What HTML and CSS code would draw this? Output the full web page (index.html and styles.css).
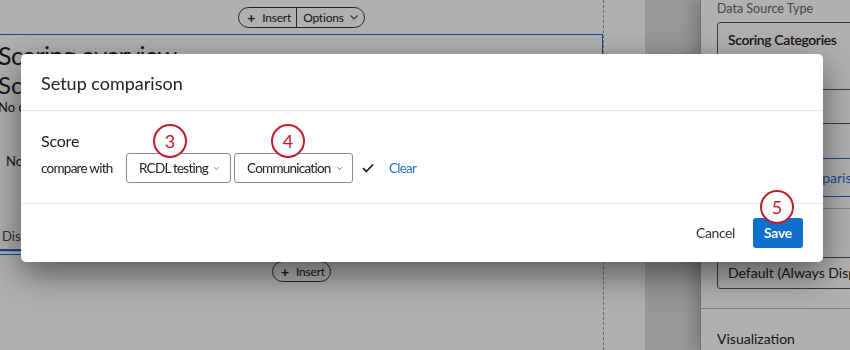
FILE: index.html
```html
<!DOCTYPE html>
<html lang="en">
<head>
    <meta charset="UTF-8">
    <meta name="viewport" content="width=device-width, initial-scale=1.0">
    <title>Setup comparison</title>
    <link rel="stylesheet" href="styles.css">
</head>
<body>
    <div class="app">
        <main class="canvas">
            <div class="column">
                <div class="toolbar">
                    <div class="pill">
                        <span class="pill-item"><span class="plus">+</span>Insert</span>
                        <span class="pill-item divided">Options
                            <svg class="chev" width="8" height="5" viewBox="0 0 8 5"><polyline points="0.5,0.5 4,4 7.5,0.5"/></svg>
                        </span>
                    </div>
                </div>
                <section class="widget">
                    <h1 class="widget-title">Scoring overview</h1>
                    <h2 class="widget-sub">Score</h2>
                    <p class="muted">No comparison set</p>
                    <p class="empty">No data</p>
                    <div class="tabs"><span class="tab active">Display</span></div>
                </section>
                <div class="toolbar bottom">
                    <div class="pill">
                        <span class="pill-item"><span class="plus">+</span>Insert</span>
                    </div>
                </div>
            </div>
        </main>
        <div class="gutter"></div>
        <aside class="sidebar">
            <div class="field-label">Data Source Type</div>
            <div class="option-list">
                <div class="option">Scoring Categories</div>
                <div class="option">Questions</div>
                <div class="option last">Survey</div>
            </div>
            <div class="compare-btn">Setup comparison</div>
            <div class="section">
                <div class="field-label">Display</div>
                <div class="select-box">Default (Always Display)</div>
            </div>
            <div class="section">
                <div class="section-title">Visualization</div>
            </div>
        </aside>
    </div>

    <div class="overlay"></div>

    <div class="modal">
        <div class="modal-header">Setup comparison</div>
        <div class="modal-body">
            <div class="score-label">Score</div>
            <div class="compare-row">
                <span class="compare-text">compare with</span>
                <div class="dropdowns">
                    <div class="dropdown first">RCDL testing
                        <svg class="chev" width="8" height="5" viewBox="0 0 8 5"><polyline points="0.5,0.5 4,4 7.5,0.5"/></svg>
                    </div>
                    <div class="dropdown second">Communication
                        <svg class="chev" width="8" height="5" viewBox="0 0 8 5"><polyline points="0.5,0.5 4,4 7.5,0.5"/></svg>
                    </div>
                </div>
                <svg class="check" width="12" height="10" viewBox="0 0 12 10"><polyline points="1,5.2 4.3,8.5 11,1.5"/></svg>
                <a href="#" class="clear-link">Clear</a>
            </div>
        </div>
        <div class="modal-footer">
            <button class="btn-cancel">Cancel</button>
            <button class="btn-save">Save</button>
        </div>

        <!-- Schritt-Markierungen -->
        <span class="step step-3">3</span>
        <span class="step step-4">4</span>
        <span class="step step-5">5</span>
    </div>
</body>
</html>
```

FILE: styles.css
```css
body {
    margin: 0;
    font-family: Lato, "Open Sans", Arial, sans-serif;
    color: #333;
    overflow: hidden;
}
.app {
    display: flex;
    height: 350px;
    background: #fff;
}
.canvas {
    width: 645px;
    flex: none;
    background: #fff;
}
.column {
    width: 604px;
    height: 350px;
    border-right: 1px dashed #9a9a9a;
    display: flex;
    flex-direction: column;
    box-sizing: border-box;
}
.toolbar {
    height: 34px;
    display: flex;
    align-items: center;
    justify-content: center;
    flex: none;
}
.toolbar.bottom {
    height: auto;
    margin-top: 6px;
}
.pill {
    display: flex;
    height: 19px;
    border: 1px solid #333;
    border-radius: 11px;
    font-size: 12px;
    line-height: 19px;
    color: #222;
    letter-spacing: -0.2px;
}
.pill-item {
    display: flex;
    align-items: center;
    padding: 0 5px 0 8px;
}
.pill-item.divided {
    border-left: 1px solid #333;
    padding: 0 6px 0 6px;
}
.plus {
    font-weight: bold;
    font-size: 14px;
    margin-right: 7px;
}
.chev {
    margin-left: 6px;
}
.chev polyline {
    fill: none;
    stroke: #444;
    stroke-width: 1.1;
}
.widget {
    height: 221px;
    margin-left: -2px;
    border: 1px solid #1a6fd6;
    border-left: none;
    flex: none;
    box-sizing: border-box;
}
.widget-title {
    margin: 4px 0 0;
    font-size: 25px;
    line-height: 32px;
    font-weight: normal;
    letter-spacing: -0.6px;
    color: #222;
}
.widget-sub {
    margin: 0;
    font-size: 24px;
    line-height: 28px;
    font-weight: normal;
    color: #222;
}
.muted {
    margin: 0;
    font-size: 13px;
    line-height: 16px;
    color: #222;
}
.empty {
    margin: 38px 0 0 8px;
    font-size: 13px;
    color: #222;
}
.tabs {
    margin-top: 56px;
    border-bottom: 1px solid #ddd;
}
.tab {
    display: inline-block;
    padding: 0 2px 5px 4px;
    font-size: 13px;
    color: #444;
}
.tab.active {
    border-bottom: 2px solid #1a6fd6;
}
.gutter {
    width: 55px;
    flex: none;
    background: #dcdcdc;
}
.sidebar {
    flex: 1;
    border-left: 1px solid #aaa;
    padding-left: 16px;
    box-shadow: -6px 0 14px rgba(0, 0, 0, 0.2);
    background: #fff;
    white-space: nowrap;
    overflow: hidden;
}
.field-label {
    font-size: 12.5px;
    line-height: 18px;
    color: #666;
}
.option-list {
    margin-top: 4px;
    width: 160px;
    border: 1px solid #555;
    border-radius: 3px;
}
.option {
    height: 33px;
    line-height: 33px;
    padding-left: 10px;
    font-size: 14px;
    font-weight: 600;
    letter-spacing: -0.4px;
    color: #222;
}
.option.last {
    border-top: 1px solid #555;
}
.compare-btn {
    margin-top: 34px;
    width: 160px;
    height: 39px;
    line-height: 37px;
    border: 1px solid #1a6fd6;
    border-left: none;
    padding-left: 40px;
    font-size: 14px;
    color: #1a6fd6;
    box-sizing: border-box;
}
.section {
    margin: 11px 0 0 -16px;
    padding: 0 0 19px 16px;
    border-top: 1px solid #bbb;
}
.section .field-label {
    padding-top: 26px;
    line-height: 22px;
}
.select-box {
    width: 160px;
    height: 32px;
    line-height: 30px;
    border: 1px solid #555;
    border-radius: 3px;
    padding-left: 10px;
    font-size: 14px;
    color: #222;
    box-sizing: border-box;
}
.section + .section {
    margin-top: 0;
}
.section-title {
    padding-top: 19px;
    font-size: 14px;
    line-height: 22px;
    color: #222;
}
.overlay {
    position: fixed;
    inset: 0;
    background: rgba(0, 0, 0, 0.31);
}
.modal {
    position: absolute;
    left: 21px;
    top: 54px;
    width: 802px;
    height: 208px;
    background: #fff;
    border-radius: 5px;
    box-shadow: 0 12px 34px rgba(0, 0, 0, 0.5);
    color: #222;
}
.modal-header {
    height: 56px;
    line-height: 58px;
    padding-left: 20px;
    font-size: 18px;
    border-bottom: 1px solid #e6e6e6;
}
.modal-body {
    padding: 19px 20px 20px;
    border-bottom: 1px solid #e6e6e6;
}
.score-label {
    font-size: 16px;
    line-height: 22px;
    letter-spacing: -0.2px;
}
.compare-row {
    display: flex;
    align-items: center;
    height: 30px;
    margin-top: 1px;
    font-size: 13.5px;
    letter-spacing: -0.75px;
    white-space: nowrap;
}
.compare-text {
    width: 85px;
    flex: none;
}
.dropdowns {
    display: flex;
    gap: 3px;
}
.dropdown {
    display: flex;
    align-items: center;
    justify-content: space-between;
    height: 30px;
    padding: 0 11px 0 12px;
    border: 1px solid #8a8a8a;
    border-radius: 3px;
    box-sizing: border-box;
    flex: none;
    color: #222;
}
.dropdown.first {
    width: 105px;
}
.dropdown.second {
    width: 119px;
    padding-right: 10px;
}
.check {
    margin-left: 9px;
}
.check polyline {
    fill: none;
    stroke: #222;
    stroke-width: 1.8;
}
.clear-link {
    margin-left: 15px;
    color: #1a72d4;
    text-decoration: none;
}
.modal-footer {
    display: flex;
    justify-content: flex-end;
    align-items: center;
    height: 57px;
    padding-right: 20px;
    gap: 18px;
}
.btn-cancel {
    background: none;
    border: none;
    font-family: inherit;
    font-size: 14px;
    letter-spacing: -0.4px;
    color: #333;
    padding: 0;
}
.btn-save {
    width: 50px;
    height: 30px;
    background: #0f6fcf;
    color: #fff;
    border: none;
    border-radius: 3px;
    font-family: inherit;
    font-size: 14px;
    font-weight: bold;
    letter-spacing: -0.3px;
}
.step {
    position: absolute;
    width: 30px;
    height: 30px;
    border: 2.5px solid #c01c2c;
    border-radius: 50%;
    background: #fff;
    color: #c01c2c;
    font-size: 18px;
    line-height: 30px;
    text-align: center;
}
.step-3 {
    left: 132px;
    top: 70px;
}
.step-4 {
    left: 250px;
    top: 70px;
}
.step-5 {
    left: 739px;
    top: 136px;
}
```
